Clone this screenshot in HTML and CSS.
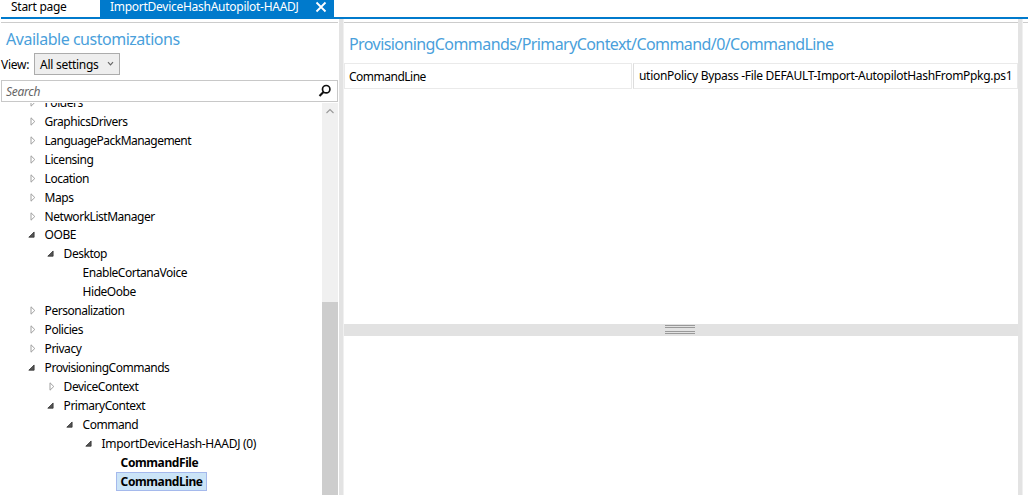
FILE: index.html
```html
<!DOCTYPE html>
<html lang="en">
<head>
<meta charset="utf-8">
<title>ImportDeviceHashAutopilot-HAADJ</title>
<link rel="stylesheet" href="styles.css">
</head>
<body>
<svg class="defs" width="0" height="0"><defs>
<symbol id="closed" viewBox="0 0 10 10"><path d="M3 .8v7.4L6.8 4.5z" fill="#fff" stroke="#a0a0a0" stroke-width="1"/></symbol>
<symbol id="open" viewBox="0 0 10 10"><path d="M6.1 2v5.2H.8z" fill="#555" stroke="#333" stroke-width=".8"/></symbol>
</defs></svg>
<div class="app">
  <header class="tabs">
    <div class="tab start"><span>Start page</span></div>
    <div class="tab active"><span>ImportDeviceHashAutopilot-HAADJ</span>
      <svg class="close" width="12" height="12" viewBox="0 0 12 12"><path d="M1.5 1.5l9 9M10.5 1.5l-9 9" stroke="#fff" stroke-width="1.8"/></svg></div>
  </header>
  <div class="workspace">
    <aside class="side">
      <h1 class="heading">Available customizations</h1>
      <div class="view"><span class="view-label">View:</span><div class="combo"><span>All settings</span>
        <svg width="7" height="6" viewBox="0 0 7 6"><path d="M1 1.2l2.5 2.6L6 1.2" fill="none" stroke="#666" stroke-width="1.2"/></svg></div></div>
      <div class="search"><span>Search</span>
        <svg width="14" height="14" viewBox="0 0 14 14" fill="none" stroke="#111"><circle cx="8.2" cy="5.2" r="3.7" stroke-width="1.7"/><path d="M5.5 8L1.5 12" stroke-width="2.2"/></svg></div>
      <div class="treebox">
        <ul class="tree">
          <li class="l0"><svg><use href="#closed"/></svg><span>Folders</span></li>
          <li class="l0"><svg><use href="#closed"/></svg><span>GraphicsDrivers</span></li>
          <li class="l0 tight"><svg><use href="#closed"/></svg><span>LanguagePackManagement</span></li>
          <li class="l0"><svg><use href="#closed"/></svg><span>Licensing</span></li>
          <li class="l0"><svg><use href="#closed"/></svg><span>Location</span></li>
          <li class="l0"><svg><use href="#closed"/></svg><span>Maps</span></li>
          <li class="l0"><svg><use href="#closed"/></svg><span>NetworkListManager</span></li>
          <li class="l0 short"><svg><use href="#open"/></svg><span>OOBE</span></li>
          <li class="l1"><svg><use href="#open"/></svg><span>Desktop</span></li>
          <li class="l2"><svg></svg><span>EnableCortanaVoice</span></li>
          <li class="l2"><svg></svg><span>HideOobe</span></li>
          <li class="l0"><svg><use href="#closed"/></svg><span>Personalization</span></li>
          <li class="l0"><svg><use href="#closed"/></svg><span>Policies</span></li>
          <li class="l0"><svg><use href="#closed"/></svg><span>Privacy</span></li>
          <li class="l0"><svg><use href="#open"/></svg><span>ProvisioningCommands</span></li>
          <li class="l1"><svg><use href="#closed"/></svg><span>DeviceContext</span></li>
          <li class="l1"><svg><use href="#open"/></svg><span>PrimaryContext</span></li>
          <li class="l2"><svg><use href="#open"/></svg><span>Command</span></li>
          <li class="l3"><svg><use href="#open"/></svg><span>ImportDeviceHash-HAADJ (0)</span></li>
          <li class="l4 bold"><svg></svg><span>CommandFile</span></li>
          <li class="l4 bold"><svg></svg><span class="selected">CommandLine</span></li>
        </ul>
        <div class="scroll"><svg width="16" height="16" viewBox="0 0 16 16"><path d="M4.5 10L8 6.5l3.5 3.5" fill="none" stroke="#999" stroke-width="1.1"/></svg><div class="thumb"></div></div>
      </div>
    </aside>
    <div class="vsplit"></div>
    <main class="main">
      <h2 class="path">ProvisioningCommands/PrimaryContext/Command/0/CommandLine</h2>
      <div class="row"><div class="name">CommandLine</div><div class="value"><span>utionPolicy Bypass -File DEFAULT-Import-AutopilotHashFromPpkg.ps1</span></div></div>
      <div class="hsplit"><div class="grip"><i></i><i></i><i></i><i></i></div></div>
    </main>
    <div class="vsplit right"></div>
    <div class="edge"></div>
  </div>
</div>
</body>
</html>
```
FILE: styles.css
```css
* { box-sizing: border-box; }
body { margin: 0; background: #fff; color: #000; font: 12px/16px "Noto Sans", "Open Sans", sans-serif; letter-spacing: -.27px; white-space: nowrap; overflow: hidden; }
h1, h2, ul { margin: 0; padding: 0; font-weight: 400; }
svg { display: block; flex: none; }
.defs { position: absolute; }
.app { width: 1028px; height: 495px; display: flex; flex-direction: column; }
.tabs { height: 19px; margin-left: 1px; display: flex; border-bottom: 2px solid #007acc; flex: none; }
.tab { height: 17px; line-height: 14px; }
.start { width: 99px; padding-left: 10px; }
.active { width: 234px; background: #007acc; color: #fff; display: flex; justify-content: space-between; padding: 0 7px 0 10px; }
.close { margin-top: 1px; }
.workspace { flex: 1; min-height: 0; display: flex; }
.side { width: 338px; padding-left: 1px; display: flex; flex-direction: column; flex: none; }
.side::before, .main::before, .edge::before { content: ""; display: block; height: 3px; border-bottom: 1px solid #ccc; flex: none; }
.heading { height: 31px; margin-bottom: -1px; padding-left: 5px; font-size: 16px; line-height: 32px; color: #4a9fdb; letter-spacing: -.48px; }
.view { height: 21px; display: flex; align-items: center; flex: none; }
.view-label { width: 33px; padding-top: 3px; }
.combo { width: 86px; height: 22px; border: 1px solid #acacac; background: #eee; display: flex; align-items: center; justify-content: space-between; padding: 0 5px; }
.combo span { padding-top: 2px; }
.search { height: 22px; margin-top: 6px; border: 1px solid #c8c8c8; display: flex; align-items: center; justify-content: space-between; padding: 0 5px 0 4px; color: #666; font-style: italic; flex: none; }
.search span { padding-top: 2px; }
.treebox { flex: 1; min-height: 0; margin-top: 1px; display: flex; overflow: hidden; }
.tree { flex: 1; list-style: none; margin-top: -10px; letter-spacing: -.47px; }
.tree li { height: 19px; display: flex; align-items: center; }
.tree li.short { height: 18px; }
.tree svg { width: 10px; height: 10px; margin-right: 7px; }
.tree .l0 { padding-left: 26.6px; }
.tree .l1 { padding-left: 45.6px; }
.tree .l2 { padding-left: 64.6px; }
.tree .l3 { padding-left: 83.6px; letter-spacing: -.3px; }
.tree .l4 { padding-left: 102.6px; }
.tight { letter-spacing: -.52px; }
.bold { font-weight: 700; letter-spacing: -.4px; }
.selected { height: 19px; line-height: 18px; margin-left: -4.6px; padding: 0 3.6px; border: 1px solid #a5b9ec; background: #cbe4f7; }
.scroll { width: 16px; background: #f0f0f0; }
.thumb { margin-top: 183px; height: 200px; background: #cdcdcd; }
.vsplit { width: 5px; margin-left: 1px; background: #e3e3e3; border-right: 1px solid #f0f0f0; flex: none; }
.main { flex: 1; min-width: 0; }
.path { height: 41px; margin-bottom: -1px; padding-left: 5px; font-size: 16px; line-height: 42px; color: #4a9fdb; letter-spacing: -.58px; }
.row { height: 26px; display: flex; line-height: 25px; }
.name { width: 288px; border: 1px solid #eaeaea; padding-left: 4px; letter-spacing: -.5px; }
.value { flex: 1; margin-left: 1px; border: 1px solid #eaeaea; border-left: 1px solid #ddd; padding-left: 5px; line-height: 23px; letter-spacing: -.3px; }
.hsplit { height: 12px; margin-top: 235px; padding: 1px 0 0 321px; background: #e2e2e2; }
.grip { width: 30px; }
.grip i { display: block; height: 1px; margin-bottom: 1px; background: #999; }
.grip i:nth-child(2) { margin-bottom: 3px; }
.right { margin-left: 0; }
.edge { width: 5px; flex: none; }
```
